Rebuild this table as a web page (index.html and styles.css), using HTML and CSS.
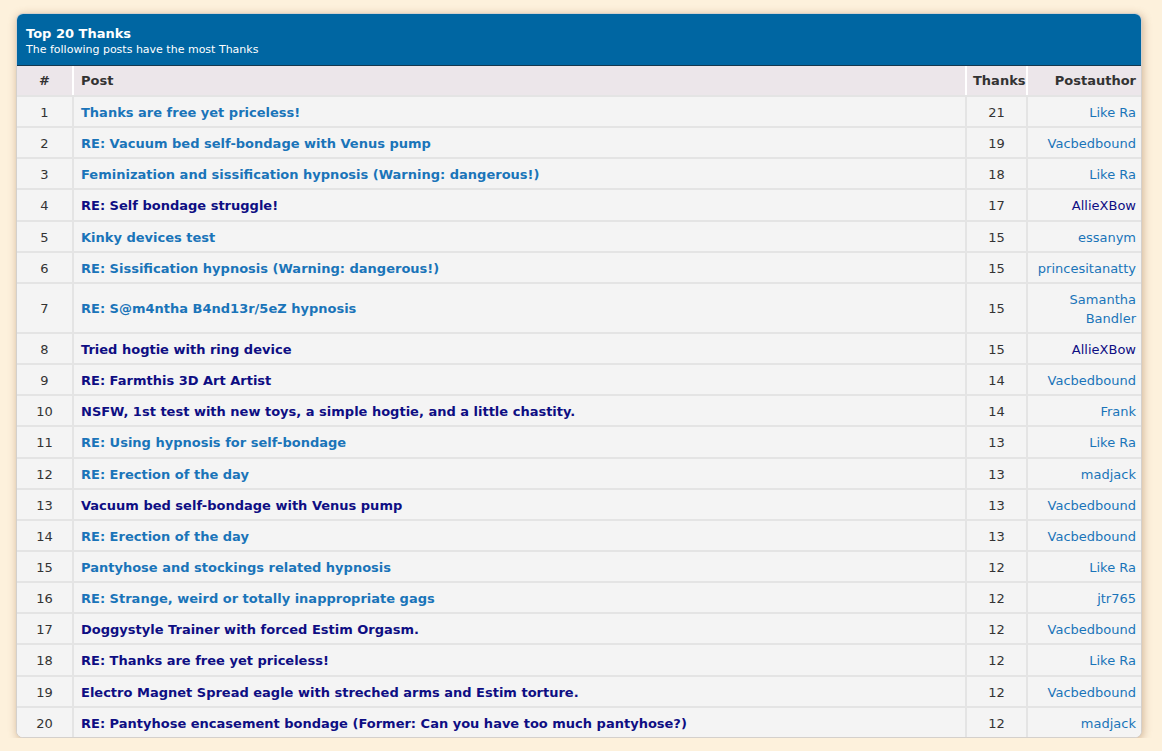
FILE: index.html
```html
<!DOCTYPE html>
<html>
<head>
<meta charset="utf-8">
<link rel="stylesheet" href="styles.css">
</head>
<body>
<div class="panel">
  <div class="panel-head">
    <div class="panel-title">Top 20 Thanks</div>
    <div class="panel-sub">The following posts have the most Thanks</div>
  </div>
  <table class="tbl">
    <colgroup>
      <col class="c-num"><col class="c-post"><col class="c-thx"><col class="c-auth">
    </colgroup>
    <thead>
      <tr><th class="num">#</th><th class="post">Post</th><th class="thx">Thanks</th><th class="auth">Postauthor</th></tr>
    </thead>
    <tbody>
      <tr><td class="num">1</td><td class="post"><a class="new">Thanks are free yet priceless!</a></td><td class="thx">21</td><td class="auth"><a class="new">Like Ra</a></td></tr>
      <tr><td class="num">2</td><td class="post"><a class="new">RE: Vacuum bed self-bondage with Venus pump</a></td><td class="thx">19</td><td class="auth"><a class="new">Vacbedbound</a></td></tr>
      <tr><td class="num">3</td><td class="post"><a class="new">Feminization and sissification hypnosis (Warning: dangerous!)</a></td><td class="thx">18</td><td class="auth"><a class="new">Like Ra</a></td></tr>
      <tr><td class="num">4</td><td class="post"><a class="seen">RE: Self bondage struggle!</a></td><td class="thx">17</td><td class="auth"><a class="seen">AllieXBow</a></td></tr>
      <tr><td class="num">5</td><td class="post"><a class="new">Kinky devices test</a></td><td class="thx">15</td><td class="auth"><a class="new">essanym</a></td></tr>
      <tr><td class="num">6</td><td class="post"><a class="new">RE: Sissification hypnosis (Warning: dangerous!)</a></td><td class="thx">15</td><td class="auth"><a class="new">princesitanatty</a></td></tr>
      <tr><td class="num">7</td><td class="post"><a class="new">RE: S@m4ntha B4nd13r/5eZ hypnosis</a></td><td class="thx">15</td><td class="auth"><a class="new">Samantha Bandler</a></td></tr>
      <tr><td class="num">8</td><td class="post"><a class="seen">Tried hogtie with ring device</a></td><td class="thx">15</td><td class="auth"><a class="seen">AllieXBow</a></td></tr>
      <tr><td class="num">9</td><td class="post"><a class="seen">RE: Farmthis 3D Art Artist</a></td><td class="thx">14</td><td class="auth"><a class="new">Vacbedbound</a></td></tr>
      <tr><td class="num">10</td><td class="post"><a class="seen">NSFW, 1st test with new toys, a simple hogtie, and a little chastity.</a></td><td class="thx">14</td><td class="auth"><a class="new">Frank</a></td></tr>
      <tr><td class="num">11</td><td class="post"><a class="new">RE: Using hypnosis for self-bondage</a></td><td class="thx">13</td><td class="auth"><a class="new">Like Ra</a></td></tr>
      <tr><td class="num">12</td><td class="post"><a class="new">RE: Erection of the day</a></td><td class="thx">13</td><td class="auth"><a class="new">madjack</a></td></tr>
      <tr><td class="num">13</td><td class="post"><a class="seen">Vacuum bed self-bondage with Venus pump</a></td><td class="thx">13</td><td class="auth"><a class="new">Vacbedbound</a></td></tr>
      <tr><td class="num">14</td><td class="post"><a class="new">RE: Erection of the day</a></td><td class="thx">13</td><td class="auth"><a class="new">Vacbedbound</a></td></tr>
      <tr><td class="num">15</td><td class="post"><a class="new">Pantyhose and stockings related hypnosis</a></td><td class="thx">12</td><td class="auth"><a class="new">Like Ra</a></td></tr>
      <tr><td class="num">16</td><td class="post"><a class="new">RE: Strange, weird or totally inappropriate gags</a></td><td class="thx">12</td><td class="auth"><a class="new">jtr765</a></td></tr>
      <tr><td class="num">17</td><td class="post"><a class="seen">Doggystyle Trainer with forced Estim Orgasm.</a></td><td class="thx">12</td><td class="auth"><a class="new">Vacbedbound</a></td></tr>
      <tr><td class="num">18</td><td class="post"><a class="seen">RE: Thanks are free yet priceless!</a></td><td class="thx">12</td><td class="auth"><a class="new">Like Ra</a></td></tr>
      <tr><td class="num">19</td><td class="post"><a class="seen">Electro Magnet Spread eagle with streched arms and Estim torture.</a></td><td class="thx">12</td><td class="auth"><a class="new">Vacbedbound</a></td></tr>
      <tr><td class="num">20</td><td class="post"><a class="seen">RE: Pantyhose encasement bondage (Former: Can you have too much pantyhose?)</a></td><td class="thx">12</td><td class="auth"><a class="new">madjack</a></td></tr>
    </tbody>
  </table>
</div>
</body>
</html>
```

FILE: styles.css
```css
html, body {
  margin: 0;
  padding: 0;
}
body {
  background: #fdf1dc;
  font-family: "DejaVu Sans", Verdana, sans-serif;
  font-size: 13px;
  color: #333;
  padding: 13px 20px 0 16px;
}
.panel {
  width: 1124px;
  border: 1px solid #d4d0cc;
  border-radius: 7px;
  overflow: hidden;
  background: #fff;
  box-shadow: 1px 2px 8px rgba(150, 100, 60, 0.45);
}
.panel-head {
  background: #0066a2;
  color: #fff;
  padding: 11px 9px 7px;
  border-bottom: 1px solid #14384f;
}
.panel-title {
  font-weight: bold;
  font-size: 13px;
  line-height: 17px;
}
.panel-sub {
  font-size: 11px;
  line-height: 16px;
}
.tbl {
  width: 100%;
  border-collapse: separate;
  border-spacing: 0;
  table-layout: fixed;
}
.c-num { width: 57px; }
.c-thx { width: 61px; }
.c-auth { width: 113px; }
.tbl th {
  background: #ece6ea;
  font-weight: bold;
  color: #333;
  height: 29px;
  padding: 0 6px;
  border-right: 2px solid #fff;
  line-height: 19px;
}
.tbl td {
  background: #f4f4f4;
  border-top: 2px solid #e4e4e4;
  border-right: 2px solid #e4e4e4;
  padding: 6px 6px 4.15px;
  line-height: 19px;
  vertical-align: middle;
}
.tbl th:last-child, .tbl td:last-child { border-right: 0; }
.num { text-align: center; }
.post { text-align: left; }
.tbl td.post { font-weight: bold; padding-left: 7px; }
.tbl th.post { padding-left: 7px; }
.thx { text-align: center; }
.auth { text-align: right; }
.tbl th.auth, .tbl td.auth { padding-right: 5px; }
a.new { color: #1a74b9; }
a.seen { color: #0e0e83; }
```
